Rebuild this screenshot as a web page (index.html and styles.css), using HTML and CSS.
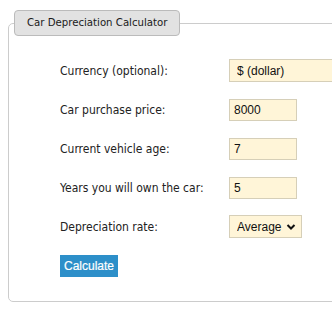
FILE: index.html
```html
<!DOCTYPE html>
<html lang="en">
<head>
  <meta charset="UTF-8">
  <title>Car Depreciation Calculator</title>
  <link rel="stylesheet" href="styles.css">
</head>
<body>

<div class="page">
  <fieldset class="calc-box">
    <legend>Car Depreciation Calculator</legend>
    <form id="calcForm" class="calc-form">
      <label for="currency">Currency (optional):</label>
      <select id="currency" class="field wide">
        <option>$ (dollar)</option>
      </select>

      <label for="price">Car purchase price:</label>
      <input type="text" id="price" class="field" value="8000">

      <label for="age">Current vehicle age:</label>
      <input type="text" id="age" class="field" value="7">

      <label for="years">Years you will own the car:</label>
      <input type="text" id="years" class="field" value="5">

      <label for="rate">Depreciation rate:</label>
      <select id="rate" class="field rate">
        <option>Average</option>
      </select>

      <button type="submit">Calculate</button>
    </form>
  </fieldset>
</div>

</body>
</html>
```

FILE: styles.css
```css
body {
  margin: 0;
  font-family: "DejaVu Sans Condensed", "DejaVu Sans", sans-serif;
  font-size: 12px;
  color: #222;
  background: #fff;
}

.page {
  width: 332px;
  height: 311px;
  overflow: hidden;
  box-sizing: border-box;
  padding: 10px 0 0 8px;
}

.calc-box {
  width: 340px;
  margin: 0;
  padding: 0 0 24px 0;
  border: 1px solid #ccc;
  border-radius: 5px;
  box-sizing: border-box;
}

.calc-box legend {
  margin-left: 5px;
  padding: 5px 12px 6px;
  background: #e2e2e2;
  border: 1px solid #bbb;
  border-radius: 4px;
  font-size: 11.3px;
  color: #1a1a1a;
}

.calc-form {
  display: grid;
  grid-template-columns: 169px auto;
  grid-auto-rows: 23px;
  row-gap: 16px;
  align-items: center;
  justify-items: start;
  padding: 23px 0 0 51px;
}

.field {
  height: 22px;
  width: 68px;
  box-sizing: border-box;
  padding: 0 4px;
  border: 1px solid #d6cfb8;
  background: #fff5d8;
  font-family: "Liberation Sans", Arial, sans-serif;
  font-size: 12px;
  color: #111;
  border-radius: 0;
}

select.field {
  -webkit-appearance: none;
  appearance: none;
  height: 23px;
  padding: 0 7px;
}

.field.wide {
  width: 130px;
}

.field.rate {
  width: 73px;
  padding-right: 18px;
  background: #fff5d8 url("data:image/svg+xml,%3Csvg xmlns='http://www.w3.org/2000/svg' width='10' height='8'%3E%3Cpath d='M1.5 2l3.5 3.5L8.5 2' fill='none' stroke='%23111' stroke-width='2'/%3E%3C/svg%3E") no-repeat right 5px center;
}

button {
  grid-column: 1;
  height: 22px;
  padding: 0 4px;
  background: #2d8fc9;
  color: #fff;
  border: none;
  border-radius: 0;
  font-family: "Liberation Sans", Arial, sans-serif;
  font-size: 12px;
  cursor: pointer;
  -webkit-text-stroke: 0.2px #fff;
}

button:hover {
  background: #3a9ad4;
}
```
